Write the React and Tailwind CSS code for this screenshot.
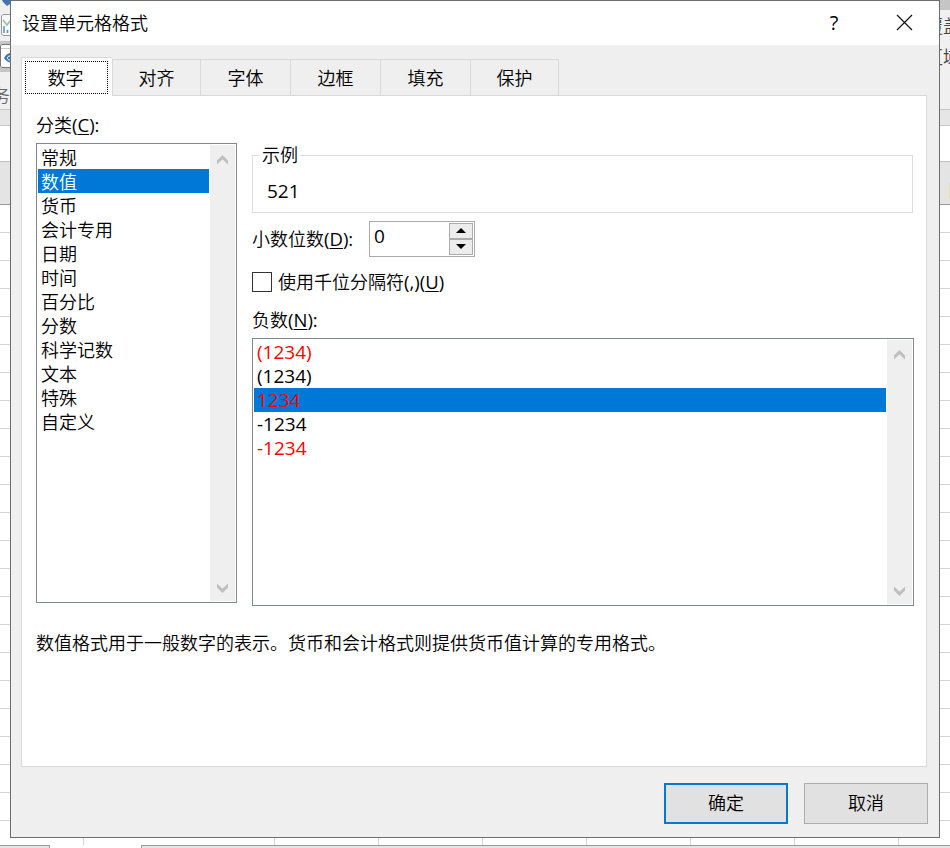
import React, { useState } from 'react';

const TABS = [
  { name: '对齐', cls: 'w-[88px]' },
  { name: '字体', cls: 'w-[90px]' },
  { name: '边框', cls: 'w-[90px]' },
  { name: '填充', cls: 'w-[90px]' },
  { name: '保护', cls: 'w-[88px]' },
];

const CATEGORIES = ['常规', '数值', '货币', '会计专用', '日期', '时间', '百分比', '分数', '科学记数', '文本', '特殊', '自定义'];

const NEGATIVES = [
  { text: '(1234)', red: true },
  { text: '(1234)', red: false },
  { text: '1234', red: true },
  { text: '-1234', red: false },
  { text: '-1234', red: true },
];

const Chevron = ({ down }) => (
  <svg width="11" height="10" viewBox="0 0 11 10" className={down ? 'rotate-180' : ''}>
    <path d="M0 5.5 L5.5 0 L11 5.5 V9.500 L5.5 4.200 L0 9.500 Z" fill="#bfbfbf" />
  </svg>
);

const ScrollBar = () => (
  <div className="flex w-[25px] shrink-0 flex-col items-center justify-between bg-[#efefef] pt-[10px] pb-[8px]">
    <Chevron />
    <Chevron down />
  </div>
);

const Latin = ({ children }) => <span className="text-[18.500px] font-normal">{children}</span>;

const Hotkey = ({ children }) => (
  <span className="underline decoration-1 underline-offset-2">{children}</span>
);

// 对话框后面的工作表
const Worksheet = () => (
  <div className="flex h-full flex-col">
    <div className="relative h-[109px] shrink-0 overflow-hidden bg-[#f0f0f0]">
      <div className="h-[10px] bg-[#c5c5c5]"></div>
      <div className="absolute left-0 top-0 h-[41px] w-[10px] bg-[#efefef]"></div>
      <div className="absolute left-0 top-[41px] h-[31px] w-[10px] bg-[#c5c5c5]"></div>
      <svg className="absolute left-0 top-0" width="10" height="72" viewBox="0 0 10 72">
        <path d="M2 0 H10 V4 L7 6 L3 2 Z" fill="#4275ad" />
        <path d="M12 14.500 H3 L1.500 16 V34 L3 35.500 H12" fill="#f7f7f7" stroke="#999" />
        <path d="M3 20 L7 25 L10 21" fill="none" stroke="#94bda7" strokeWidth="1.5" />
        <path d="M4 26 V33 M7.500 30 V33" stroke="#5b8ec4" strokeWidth="1.5" />
        <path d="M12 44.500 H2 L0.500 46 V66 L2 67.500 H12" fill="#fff" stroke="#777" />
        <path d="M1 48.500 H10" stroke="#ccc" />
        <path d="M4 58 C6 54.500 8 53 11 53 V62.500 C8 62.500 6 61 4 58 Z" fill="#4275ad" />
        <path d="M10 56 C8 56 7.500 57 7.500 58 C7.500 59 8 60 10 60" fill="none" stroke="#fff" />
      </svg>
      <span className="absolute -left-[8px] top-[82px] text-[18px] leading-7 text-[#666]">务</span>
      <span className="absolute left-[925px] top-[12px] w-10 text-[18px] leading-7 text-[#444] whitespace-nowrap">覆盖</span>
      <span className="absolute left-[925px] top-[43px] w-10 text-[18px] leading-7 text-[#444] whitespace-nowrap">区域</span>
    </div>
    <div className="h-[17px] shrink-0 border-y border-[#c6c6c6] bg-[#e6e6e6]"></div>
    <div className="h-[35px] shrink-0 bg-white"></div>
    <div className="flex h-[44px] shrink-0 items-center justify-end border-b border-t border-b-[#999] border-t-[#c0c0c0] bg-[#e4e4e4]">
      <div className="mt-4 h-4 w-px bg-[#e6e6a0]"></div>
    </div>
    <div className="flex flex-col">
      {Array.from({ length: 22 }, (_, i) => (
        <div key={i} className="h-7 shrink-0 border-b border-[#d4d4d4] bg-white"></div>
      ))}
    </div>
    <div className="flex h-6 shrink-0">
      <div className="w-[84px] border-r border-[#d4d4d4]"></div>
      <div className="w-[191px] border-r border-[#d4d4d4]"></div>
      {Array.from({ length: 6 }, (_, i) => (
        <div key={i} className="w-[104px] border-r border-[#d4d4d4]"></div>
      ))}
    </div>
    <div className="flex h-[3px] shrink-0 justify-between">
      <div className="w-[50px] border-r border-t border-[#999] bg-[#e4e4e4]"></div>
      <div className="w-[809px] border-l border-t border-[#999] bg-[#e4e4e4]"></div>
    </div>
  </div>
);

const App = () => {
  const [category, setCategory] = useState(1);
  const [negative, setNegative] = useState(2);
  const [decimals, setDecimals] = useState(0);
  const [separator, setSeparator] = useState(false);

  return (
    <div className="relative h-[848px] w-[950px] overflow-hidden bg-white font-['Open_Sans','Noto_Sans_CJK_SC',sans-serif] text-[18px] leading-6 font-[350] text-black">
      <Worksheet />

      {/* 对话框 */}
      <div className="absolute left-[10px] top-0 flex h-[838px] w-[930px] flex-col border border-[#6d6d6d] bg-[#efefef]">
        <div className="flex h-11 shrink-0 items-center bg-white pb-px pl-[11px] pr-[26px]">
          <h1 className="flex-1">设置单元格格式</h1>
          <button className="mr-[56px] w-3 text-center text-[20px] font-normal">?</button>
          <button>
            <svg width="17" height="17" viewBox="0 0 17 17">
              <path d="M1 1 L16 16 M16 1 L1 16" stroke="#111" strokeWidth="1.2" />
            </svg>
          </button>
        </div>

        {/* 选项卡 */}
        <div className="z-10 ml-[10px] mt-3 flex h-[39px] shrink-0 items-end">
          <button className="h-[39px] w-[91px] border-l border-t border-[#d9d9d9] bg-white p-[3px] pb-[2px] pr-[4px]">
            <span className="flex h-full items-center justify-center border border-dotted border-black pr-0.5">数字</span>
          </button>
          <div className="flex h-[37px] border-l border-[#d9d9d9]">
            {TABS.map((tab) => (
              <button key={tab.name} className={`${tab.cls} border-b border-r border-t border-[#d9d9d9]`}>
                {tab.name}
              </button>
            ))}
          </div>
        </div>

        <div className="-mt-px ml-[10px] h-[672px] w-[906px] shrink-0 border border-[#d9d9d9] bg-white pl-[14px] pt-[17px]">
          <div className="flex">
            {/* 分类 */}
            <div className="w-[201px]">
              <div className="h-[30px]">分类<Latin>(<Hotkey>C</Hotkey>):</Latin></div>
              <div className="flex h-[460px] border border-[#828790] p-px">
                <ul className="w-[171px] mr-px">
                  {CATEGORIES.map((name, i) => (
                    <li
                      key={name}
                      onClick={() => setCategory(i)}
                      className={`h-6 pl-[3px] pt-px ${i === category ? 'bg-[#0078d7] text-white' : ''}`}
                    >
                      {name}
                    </li>
                  ))}
                </ul>
                <ScrollBar />
              </div>
            </div>

            <div className="ml-[15px] w-[662px] pt-[30px]">
              {/* 示例 */}
              <div className="mt-3 h-[58px] w-[661px] border border-[#dcdcdc]">
                <span className="-mt-[13px] ml-[6px] block h-6 w-[41px] bg-white pl-[3px]">示例</span>
                <span className="mt-3 ml-[14px] block text-[19px] font-normal">521</span>
              </div>

              <div className="mt-2 flex h-9">
                <span className="w-[117px] pt-[6px]">小数位数<Latin>(<Hotkey>D</Hotkey>):</Latin></span>
                <div className="flex w-[106px] justify-between border border-[#ababab] p-px">
                  <span className="pl-[3px] pt-px text-[19px] font-normal">{decimals}</span>
                  <div className="flex w-[24px] flex-col">
                    <button onClick={() => setDecimals(decimals + 1)} className="flex flex-1 items-center justify-center border border-[#ababab] bg-[#ececec] pb-px">
                      <svg width="10" height="5"><path d="M5 0 L10 5 H0 Z" /></svg>
                    </button>
                    <button onClick={() => setDecimals(Math.max(0, decimals - 1))} className="flex flex-1 items-center justify-center border border-[#ababab] bg-[#ececec] pb-px">
                      <svg width="10" height="5"><path d="M0 0 H10 L5 5 Z" /></svg>
                    </button>
                  </div>
                </div>
              </div>

              <label className="mt-[13px] flex h-6 items-center">
                <input
                  type="checkbox"
                  checked={separator}
                  onChange={() => setSeparator(!separator)}
                  className="mr-[6px] h-5 w-5 appearance-none border border-[#333] bg-white checked:bg-[#333]"
                />
                <span>使用千位分隔符<Latin>(,)(<Hotkey>U</Hotkey>)</Latin></span>
              </label>

              <div className="mt-[14px] h-[30px]">负数<Latin>(<Hotkey>N</Hotkey>):</Latin></div>
              <div className="flex h-[268px] justify-between border border-[#828790] p-px">
                <ul className="w-[632px] text-[19px] font-normal">
                  {NEGATIVES.map((item, i) => (
                    <li
                      key={i}
                      onClick={() => setNegative(i)}
                      className={`h-6 pl-[3px] ${item.red ? 'text-[#ff0000]' : ''} ${i === negative ? 'bg-[#0078d7]' : ''}`}
                    >
                      {item.text}
                    </li>
                  ))}
                </ul>
                <ScrollBar />
              </div>
            </div>
          </div>

          <p className="mt-[25px]">数值格式用于一般数字的表示。货币和会计格式则提供货币值计算的专用格式。</p>
        </div>

        <div className="mr-[11px] mt-4 flex justify-end gap-4">
          <button className="h-[41px] w-[124px] border-2 border-[#0078d7] bg-[#e1e1e1] pb-px">确定</button>
          <button className="h-[41px] w-[124px] border border-[#adadad] bg-[#e1e1e1] pb-px">取消</button>
        </div>
      </div>
    </div>
  );
};

export default App;
